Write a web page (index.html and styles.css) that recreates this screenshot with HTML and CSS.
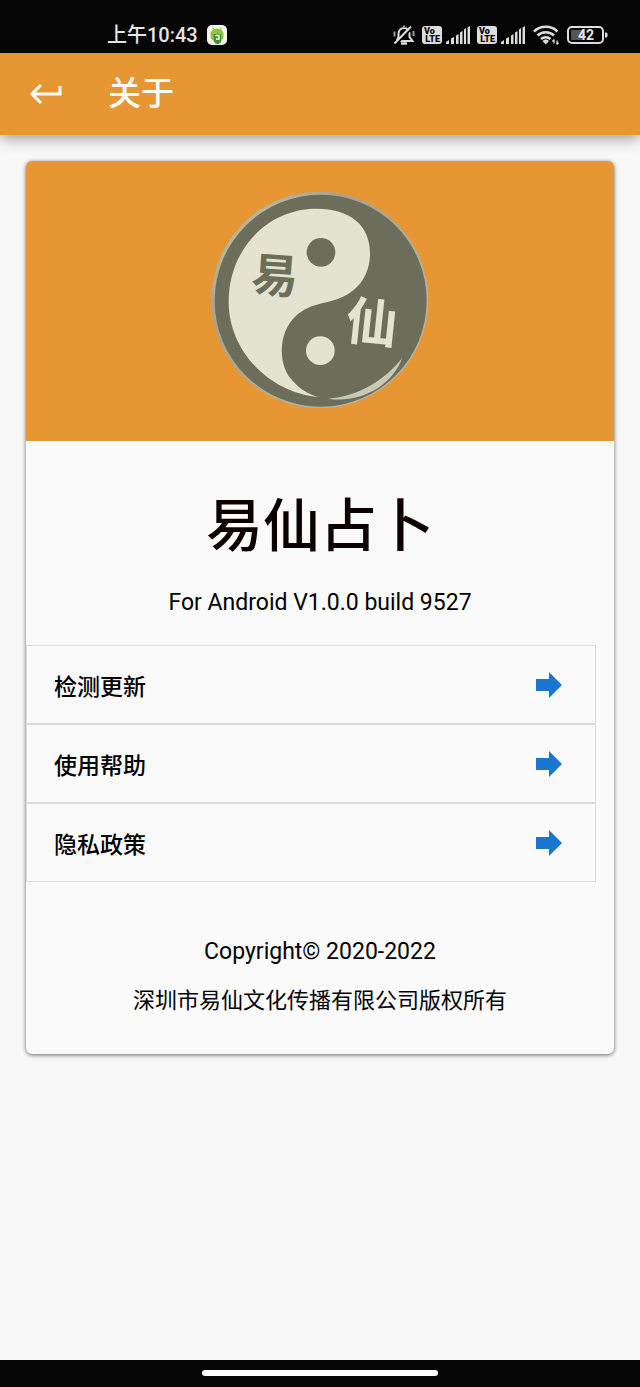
FILE: index.html
```html
<!DOCTYPE html>
<html lang="zh-CN">
<head>
  <meta charset="UTF-8" />
  <meta name="viewport" content="width=device-width, initial-scale=1.0"/>
  <title>关于</title>
  <link rel="stylesheet" href="styles.css">
</head>
<body>
  <!-- Status bar -->
  <div class="status-bar">
    <div class="status-left">
      <span class="time">上午10:43</span>
      <svg width="20" height="20" viewBox="0 0 20 20">
        <rect width="20" height="20" rx="5" fill="#f4f6ee"/>
        <path d="M5.500 2.500l1.800 2.500M14.500 2.500l-1.800 2.500" stroke="#83b935" stroke-width="1"/>
        <path d="M3.500 9a6.500 5.500 0 0 1 13 0v2.500a6.500 5 0 0 1-13 0z" fill="#8bc53f"/>
        <path d="M6.500 9h7.500v5a3.500 3.500 0 0 1-7 2.500z" fill="#43942f"/>
        <path d="M8.500 10.500h3.500v3.500H9" fill="none" stroke="#fff" stroke-width="1.300"/>
      </svg>
    </div>
    <div class="status-right">
      <svg width="22" height="22" viewBox="0 0 22 22" fill="none" stroke="#ddd" stroke-width="2">
        <path d="M4 16l1.500-3V9.500a5.500 5.500 0 0 1 11 0V13l3 4H5"/>
        <path d="M8 19.500h6" stroke-width="2.500"/>
        <path d="M11 4V1.500M1.500 7.500v5M20.500 7v5" stroke="#999"/>
        <path d="M3 20.500L19.500 3.500" stroke="#050505" stroke-width="2"/>
        <path d="M1.500 19.500L18 2.500"/>
      </svg>
      <div class="volte"><span>Vo</span><span class="lte">LTE</span></div>
      <svg class="signal" width="24" height="18" viewBox="0 0 24 18" fill="#ddd">
        <path d="M0 18v-2l3-2v4zM5 12.500l3-1.500v7H5zM10 9.500L12.500 8v10H10zM14 6.500L16.500 5v13H14zM18 3.500L20 2v16h-2zM21.500 1.500L24 0v18h-2.500z"/>
      </svg>
      <div class="volte"><span>Vo</span><span class="lte">LTE</span></div>
      <svg class="signal" width="24" height="18" viewBox="0 0 24 18" fill="#ddd">
        <path d="M0 18v-2l3-2v4zM5 12.500l3-1.500v7H5zM10 9.500L12.500 8v10H10zM14 6.500L16.500 5v13H14zM18 3.500L20 2v16h-2zM21.500 1.500L24 0v18h-2.500z"/>
      </svg>
      <svg class="wifi" width="26" height="20" viewBox="0 0 26 20" fill="none" stroke="#ddd" stroke-width="2.500">
        <path d="M1 6.500a17 17 0 0 1 23.500 0M4.500 10.500a12 12 0 0 1 16.500 0M8 14a7 7 0 0 1 9.500 0"/>
        <path d="M9.500 16a5 5 0 0 1 6.500 0l-3.200 3.500z" fill="#ddd" stroke="none"/>
        <path d="M21 14.500v4M24 15.500v4M19.500 16.500L21 14.500M24 19.500l1.500-2" stroke-width="1.300"/>
      </svg>
      <svg width="41" height="18" viewBox="0 0 41 18">
        <rect x="4" y="4" width="13" height="10" rx="1" fill="#555"/>
        <rect x="1" y="1" width="35" height="16" rx="4" fill="none" stroke="#ddd" stroke-width="2"/>
        <path d="M38 6.500h1a1.500 1.500 0 0 1 1.500 1.500v2a1.500 1.500 0 0 1-1.500 1.500h-1z" fill="#ddd"/>
        <text class="battery-text" x="19" y="14" text-anchor="middle">42</text>
      </svg>
    </div>
  </div>

  <header class="app-bar">
    <button class="back" aria-label="返回">
      <svg width="34" height="22" viewBox="0 0 34 22" fill="none" stroke="#fff" stroke-width="3">
        <path d="M12 2L3 11l9 9M3 11h28V3"/>
      </svg>
    </button>
    <h1>关于</h1>
  </header>

  <main>
    <section class="card">
      <div class="banner">
        <svg width="218" height="218" viewBox="33 33 654 654">
          <defs>
            <linearGradient id="rim" x1="0" y1="0" x2="1" y2="1">
              <stop offset="0" stop-color="#c9c9b8"/>
              <stop offset="0.300" stop-color="#a5a391"/>
              <stop offset="1" stop-color="#bbb9a8"/>
            </linearGradient>
          </defs>
          <circle cx="360" cy="360" r="325" fill="url(#rim)"/>
          <circle cx="362" cy="362" r="318" fill="#6d6d5b"/>
          <!-- light half -->
          <path d="M356 651C205 638 86 510 86 365C86 210 200 86 350 86C450 86 510 135 510 220C510 280 480 330 420 354C370 374 335 368 290 406C230 459 235 560 278 602C300 628 325 642 356 651Z" fill="#e4e3d2"/>
          <circle cx="363" cy="217" r="43" fill="#6d6d5b"/>
          <circle cx="361" cy="512" r="43" fill="#e4e3d2"/>
          <path d="M384 656C475 650 555 600 606 535C580 610 490 672 384 656Z" fill="#c9c9b8"/>
          <text class="mark dark" x="155" y="337" transform="rotate(4 222 290)">易</text>
          <text class="mark light" x="438" y="484" transform="rotate(6 515 430)">仙</text>
        </svg>
      </div>

      <div class="intro">
        <h2>易仙占卜</h2>
        <p>For Android V1.0.0 build 9527</p>
      </div>

      <ul class="menu">
        <li><a href="#update">检测更新
          <svg width="26" height="26" viewBox="0 0 26 26" fill="#1976d2"><path d="M0 7h13V0l13 13-13 13v-7H0z"/></svg>
        </a></li>
        <li><a href="#help">使用帮助
          <svg width="26" height="26" viewBox="0 0 26 26" fill="#1976d2"><path d="M0 7h13V0l13 13-13 13v-7H0z"/></svg>
        </a></li>
        <li><a href="#privacy">隐私政策
          <svg width="26" height="26" viewBox="0 0 26 26" fill="#1976d2"><path d="M0 7h13V0l13 13-13 13v-7H0z"/></svg>
        </a></li>
      </ul>

      <footer class="copyright">
        <p>Copyright© 2020-2022</p>
        <p class="company">深圳市易仙文化传播有限公司版权所有</p>
      </footer>
    </section>
  </main>

  <div class="nav-bar"><div class="handle"></div></div>
</body>
</html>
```

FILE: styles.css
```css
* {
  box-sizing: border-box;
}

body {
  margin: 0;
  min-height: 100vh;
  display: flex;
  flex-direction: column;
  background: #f8f8f8;
  color: #000;
  font-family: Roboto, "Noto Sans CJK SC", sans-serif;
}

h1, h2, p, ul {
  margin: 0;
  padding: 0;
  font-weight: 400;
}

svg {
  display: block;
  flex: none;
}

/* Status bar */
.status-bar {
  height: 53px;
  padding: 17px 32px 0 107px;
  display: flex;
  justify-content: space-between;
  background: #050505;
  color: #e4e4e4;
}

.status-left, .status-right {
  height: 36px;
  display: flex;
  align-items: center;
  gap: 9px;
}

.status-right {
  gap: 7px;
}

.time {
  font-size: 20px;
  font-weight: 500;
  line-height: 36px;
}

.volte {
  width: 20px;
  height: 18px;
  padding: 1px 2px;
  border-radius: 3px;
  background: #ddd;
  color: #050505;
  font-size: 9px;
  font-weight: 900;
  line-height: 8px;
}

.volte span {
  display: block;
}

.volte .lte {
  text-align: right;
}

.signal {
  margin-left: -3px;
}

.wifi {
  margin: 0 1px;
}

.battery-text {
  font-size: 14px;
  font-weight: 700;
  fill: #e4e4e4;
}

/* App bar */
.app-bar {
  height: 82px;
  padding: 0 29px;
  display: flex;
  align-items: center;
  gap: 45px;
  background: #e69733;
  color: #fff;
  box-shadow: 0 3px 14px rgba(0, 0, 0, 0.4);
}

.app-bar h1 {
  font-size: 33px;
  font-weight: 500;
  line-height: 48px;
}

.back {
  padding: 0;
  border: none;
  background: none;
  cursor: pointer;
}

/* Card */
main {
  flex: 1;
  padding: 26px;
}

.card {
  border-radius: 6px;
  background: #fafafa;
  box-shadow: 0 1px 4px rgba(0, 0, 0, 0.6);
  overflow: hidden;
}

.banner {
  height: 280px;
  padding-top: 30px;
  display: flex;
  justify-content: center;
  background: #e69733;
}

.mark {
  font-size: 140px;
  font-weight: 700;
}

.dark {
  fill: #6d6d5b;
}

.light {
  font-size: 155px;
  fill: #e4e3d2;
}

.intro {
  padding: 46px 0 26px;
  text-align: center;
}

.intro h2 {
  font-size: 57px;
  font-weight: 500;
  line-height: 80px;
  color: #0d0000;
}

.intro p, .copyright p {
  font-size: 23px;
  line-height: 32px;
}

.intro p {
  margin-top: 20px;
}

.menu {
  margin-right: 18px;
  border: 1px solid #dcdcdc;
  list-style: none;
}

.menu li + li {
  border-top: 2px solid #dcdcdc;
}

.menu a {
  height: 77px;
  padding: 0 33px 0 27px;
  display: flex;
  justify-content: space-between;
  align-items: center;
  color: #000;
  font-family: "Noto Sans CJK SC", sans-serif;
  font-size: 23px;
  font-weight: 500;
  line-height: 32px;
  text-decoration: none;
}

.copyright {
  padding: 54px 0 37px;
  text-align: center;
}

.copyright .company {
  margin-top: 17px;
  font-size: 22px;
}

/* Gesture bar */
.nav-bar {
  height: 27px;
  padding-top: 10px;
  background: #050505;
}

.handle {
  width: 37%;
  height: 6px;
  margin: 0 auto;
  border-radius: 3px;
  background: #fff;
}
```
